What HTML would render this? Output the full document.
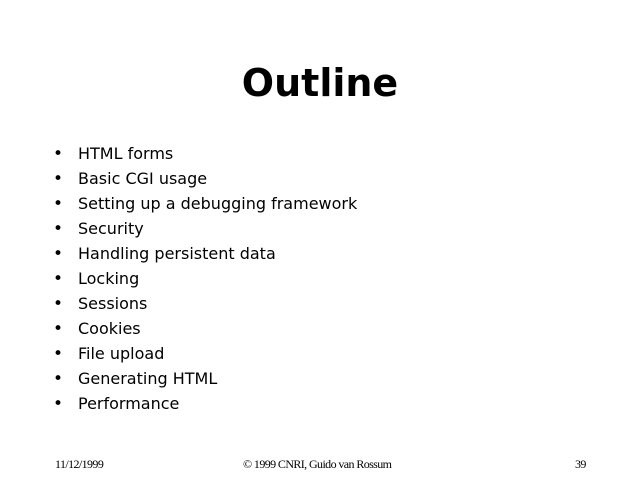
<html><head><style>
body{margin:0;width:640px;height:480px;background:#fff;position:relative;overflow:hidden;font-family:"DejaVu Sans",Verdana,sans-serif;color:#000}
h1{position:absolute;left:0;width:640px;text-align:center;top:61px;margin:0;font-size:38px;font-weight:bold;letter-spacing:0px}
.l{position:absolute;left:78px;font-size:16px;line-height:20px}
.b{position:absolute;left:53px;font-size:17px;line-height:20px}
.f{position:absolute;top:457px;font-family:"Liberation Serif",serif;font-size:12px;letter-spacing:-0.6px}
</style></head><body>
<h1>Outline</h1>
<div class="b" style="top:144px">•</div><div class="l" style="top:144px">HTML forms</div>
<div class="b" style="top:169px">•</div><div class="l" style="top:169px">Basic CGI usage</div>
<div class="b" style="top:194px">•</div><div class="l" style="top:194px">Setting up a debugging framework</div>
<div class="b" style="top:219px">•</div><div class="l" style="top:219px">Security</div>
<div class="b" style="top:244px">•</div><div class="l" style="top:244px">Handling persistent data</div>
<div class="b" style="top:269px">•</div><div class="l" style="top:269px">Locking</div>
<div class="b" style="top:294px">•</div><div class="l" style="top:294px">Sessions</div>
<div class="b" style="top:319px">•</div><div class="l" style="top:319px">Cookies</div>
<div class="b" style="top:344px">•</div><div class="l" style="top:344px">File upload</div>
<div class="b" style="top:369px">•</div><div class="l" style="top:369px">Generating HTML</div>
<div class="b" style="top:394px">•</div><div class="l" style="top:394px">Performance</div>
<div class="f" style="left:55px">11/12/1999</div>
<div class="f" style="left:243px">© 1999 CNRI, Guido van Rossum</div>
<div class="f" style="left:575px">39</div>
</body></html>
